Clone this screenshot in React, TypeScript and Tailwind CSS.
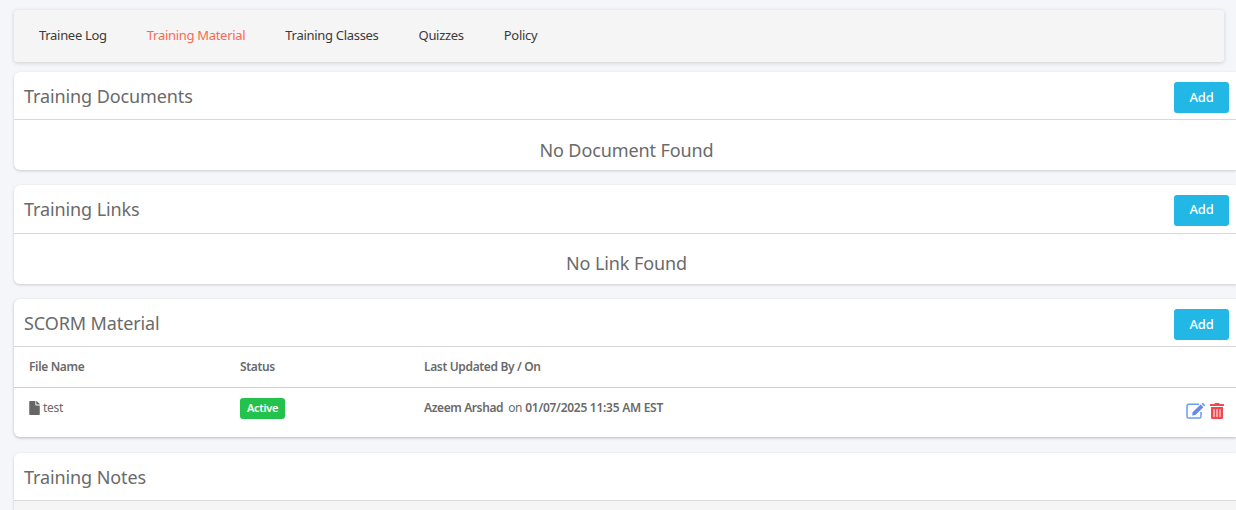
import React from "react";
import { FaFile, FaTrashAlt } from "react-icons/fa";

const font = "font-['Noto_Sans','Open_Sans',sans-serif]";

function AddButton() {
  return (
    <button className="mt-[2px] h-[31px] w-[55px] rounded-[3px] bg-[#23b7e5] text-[13px] font-medium tracking-[-0.2px] text-white">
      Add
    </button>
  );
}

function Title({ children }: { children: React.ReactNode }) {
  return <h2 className="text-[18px] tracking-[-0.1px] text-[#6a6a6a]">{children}</h2>;
}

function Header({ title, tall }: { title: string; tall?: boolean }) {
  return (
    <div
      className={`flex items-center justify-between border-b border-[#d8d8d8] pl-[10px] pr-[7px] ${
        tall ? "h-[49px]" : "h-[48px] pt-[2px]"
      }`}
    >
      <Title>{title}</Title>
      <AddButton />
    </div>
  );
}

function EmptyCard({ title, message, tall }: { title: string; message: string; tall?: boolean }) {
  return (
    <section className="mb-[15px] rounded-l-[6px] bg-white shadow-[0_1px_3px_rgba(0,0,0,0.18)]">
      <Header title={title} tall={tall} />
      <div
        className={`flex items-center justify-center pl-[3px] pt-[10px] text-[18px] tracking-[-0.1px] text-[#6a6a6a] ${
          tall ? "h-[50px] pb-[2px]" : "h-[50px]"
        }`}
      >
        {message}
      </div>
    </section>
  );
}

function EditIcon() {
  return (
    <svg width="19" height="16" viewBox="0 0 19 16" fill="none">
      <path
        d="M13 1.2H2.6A1.6 1.6 0 0 0 1 2.8v10.6A1.6 1.6 0 0 0 2.6 15h10.8a1.6 1.6 0 0 0 1.6-1.6V9"
        stroke="#6a9bf4"
        strokeWidth="1.5"
      />
      <path d="M6.6 9.2 14.6 1.6l2.8 2.6-8 7.8-3.2.6z" fill="#6a86ee" />
      <path d="M15.4 0.8 16.2 0.2a1 1 0 0 1 1.3 0l1.2 1.2a1 1 0 0 1 0 1.3l-.7.7z" fill="#6a9bf4" />
    </svg>
  );
}

export default function App() {
  const tabs = ["Trainee Log", "Training Material", "Training Classes", "Quizzes", "Policy"];
  return (
    <div className={`${font} h-[510px] w-[1236px] overflow-hidden bg-[#f4f6fa] pl-[14px] pt-[10px]`}>
      <nav className="mb-[10px] mr-[12px] flex h-[52px] items-center gap-[40px] rounded-[3px] bg-[#f5f5f5] pl-[25px] text-[13px] tracking-[-0.3px] text-[#3a3a3a] shadow-[0_1px_4px_rgba(0,0,0,0.16)]">
        {tabs.map((t) => (
          <span key={t} className={t === "Training Material" ? "text-[#f96a50]" : ""}>
            {t}
          </span>
        ))}
      </nav>

      <EmptyCard title="Training Documents" message="No Document Found" />
      <EmptyCard title="Training Links" message="No Link Found" tall />

      <section className="mb-[16px] rounded-l-[6px] bg-white shadow-[0_1px_3px_rgba(0,0,0,0.25)]">
        <Header title="SCORM Material" />
        <div className="flex h-[41px] items-center border-b border-[#cfcfcf] pl-[15px] text-[12px] font-semibold tracking-[-0.35px] text-[#6a6a6a]">
          <span className="w-[211px]">File Name</span>
          <span className="w-[184px]">Status</span>
          <span>Last Updated By / On</span>
        </div>
        <div className="flex h-[49px] items-start pl-[15px] pt-[10px] text-[12px] tracking-[-0.3px] text-[#6a6a6a]">
          <span className="flex h-[20px] w-[211px] items-center">
            <FaFile color="#666666" className="mr-[3px] h-[14px] w-[11px]" />
            test
          </span>
          <span className="w-[184px]">
            <span className="flex h-[21px] w-[45px] items-center justify-center rounded-[3px] bg-[#22c24c] text-[11px] font-semibold text-white">
              Active
            </span>
          </span>
          <span className="flex h-[20px] items-center">
            <span className="font-semibold tracking-[-0.4px]">Azeem Arshad</span>
            <span className="ml-[5px]">on</span>
            <span className="ml-[3px] font-semibold tracking-[-0.27px]">01/07/2025 11:35 AM EST</span>
          </span>
          <span className="ml-auto mr-[12px] mt-[5px] flex items-center gap-[5px]">
            <EditIcon />
            <FaTrashAlt color="#f2474d" className="h-[16px] w-[14px]" />
          </span>
        </div>
      </section>

      <section className="rounded-l-[6px] bg-white shadow-[0_1px_3px_rgba(0,0,0,0.18)]">
        <div className="flex h-[48px] items-center border-b border-[#d8d8d8] pl-[10px] pt-[2px]">
          <Title>Training Notes</Title>
        </div>
        <div className="h-[20px] bg-[#f5f5f5]" />
      </section>
    </div>
  );
}
